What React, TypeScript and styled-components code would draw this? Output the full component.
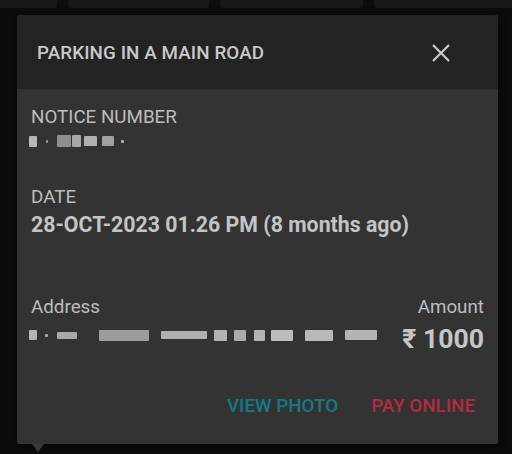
import React from "react";
import styled, { createGlobalStyle } from "styled-components";

const Global = createGlobalStyle`
  html, body { margin: 0; padding: 0; background: #0c0c0c; }
  body { font-family: Roboto, "Noto Sans", sans-serif; }
`;

const Page = styled.div`
  width: 512px;
  height: 454px;
  background: #0c0c0c;
  position: relative;
  overflow: hidden;
`;

const TileRow = styled.div`
  display: flex;
  gap: 11px;
  height: 8px;
  margin-left: -1px;
`;

const Tile = styled.div<{ $w: number }>`
  width: ${(p) => p.$w}px;
  flex: none;
  background: #171717;
  border-radius: 0 0 3px 3px;
`;

const Dialog = styled.div`
  position: absolute;
  left: 17px;
  top: 15px;
  width: 481px;
  height: 429px;
  background: #333333;
  border-radius: 2px;
  display: flex;
  flex-direction: column;
  box-shadow: 0 2px 8px rgba(0, 0, 0, 0.6);
`;

const Tail = styled.div`
  position: absolute;
  left: 15px;
  bottom: -8px;
  width: 0;
  height: 0;
  border-left: 6px solid transparent;
  border-right: 6px solid transparent;
  border-top: 8px solid #3a3a3a;
`;

const Header = styled.div`
  height: 74px;
  background: #232323;
  display: flex;
  align-items: center;
  justify-content: space-between;
  padding: 0 47px 0 20px;
  border-radius: 2px 2px 0 0;
`;

const Title = styled.div`
  color: #c9c9c9;
  font-size: 18.8px;
  font-weight: 500;
  letter-spacing: 0.1px;
  margin-top: 2px;
`;

const Body = styled.div`
  flex: 1;
  display: flex;
  flex-direction: column;
  padding: 16px 14px 0 14px;
`;

const Label = styled.div`
  color: #bdbdbd;
  font-size: 18.8px;
  line-height: 24px;
  font-weight: 400;
`;

const Value = styled.div`
  color: #c4c4c4;
  font-size: 21.3px;
  line-height: 26px;
  font-weight: 700;
  margin-top: 3px;
`;

const Redacted = styled.div<{ $h: number }>`
  display: flex;
  align-items: center;
  height: ${(p) => p.$h}px;
  margin-left: -2px;
  filter: blur(0.6px);
`;

const Chunk = styled.span<{ $w: number; $h: number; $c: string; $gap: number }>`
  display: inline-block;
  flex: none;
  width: ${(p) => p.$w}px;
  height: ${(p) => p.$h}px;
  margin-right: ${(p) => p.$gap}px;
  background: ${(p) => p.$c};
  border-radius: 1px;
`;

const Section = styled.div<{ $mt: number }>`
  margin-top: ${(p) => p.$mt}px;
`;

const Row = styled.div`
  display: flex;
  justify-content: space-between;
  align-items: flex-start;
  margin-top: 57px;
`;

const Col = styled.div<{ $right?: boolean }>`
  display: flex;
  flex-direction: column;
  align-items: ${(p) => (p.$right ? "flex-end" : "flex-start")};
`;

const Amount = styled.div`
  color: #c6c6c6;
  font-size: 26.6px;
  line-height: 32px;
  font-weight: 700;
  margin-top: 4px;
`;

const Actions = styled.div`
  display: flex;
  justify-content: flex-end;
  gap: 33px;
  margin-top: 39px;
  padding-right: 9px;
`;

const Action = styled.button<{ $c: string }>`
  background: none;
  border: none;
  padding: 0;
  font-family: Roboto, sans-serif;
  font-size: 18.8px;
  line-height: 24px;
  font-weight: 500;
  color: ${(p) => p.$c};
  cursor: pointer;
`;

const CloseBtn = styled.button`
  background: none;
  border: none;
  padding: 0;
  width: 20px;
  height: 20px;
  display: flex;
  align-items: center;
  justify-content: center;
  margin-top: 2px;
`;

const noticeChunks: [number, number, string, number][] = [
  [8, 11, "#b8b8b8", 9],
  [2, 3, "#9a9a9a", 9],
  [14, 12, "#8e8e8e", 1],
  [9, 12, "#a8a8a8", 3],
  [13, 10, "#b0b0b0", 5],
  [12, 10, "#a0a0a0", 7],
  [3, 3, "#b0b0b0", 0],
];

const addrChunks: [number, number, string, number][] = [
  [8, 10, "#b4b4b4", 8],
  [3, 3, "#aaaaaa", 9],
  [20, 7, "#a8a8a8", 22],
  [50, 11, "#9c9c9c", 12],
  [46, 8, "#b0b0b0", 7],
  [13, 11, "#b2b2b2", 7],
  [12, 11, "#aaaaaa", 8],
  [11, 11, "#b4b4b4", 6],
  [22, 11, "#bdbdbd", 12],
  [28, 11, "#b8b8b8", 12],
  [32, 10, "#b4b4b4", 0],
];

export default function App() {
  return (
    <Page>
      <Global />
      <TileRow>
        <Tile $w={58} />
        <Tile $w={141} />
        <Tile $w={143} />
        <Tile $w={140} />
      </TileRow>
      <Dialog>
        <Header>
          <Title>PARKING IN A MAIN ROAD</Title>
          <CloseBtn aria-label="close">
            <svg width="18" height="18" viewBox="0 0 18 18">
              <path d="M1 1 L17 17 M17 1 L1 17" stroke="#c9c9c9" strokeWidth="2.2" />
            </svg>
          </CloseBtn>
        </Header>
        <Body>
          <Label>NOTICE NUMBER</Label>
          <Redacted $h={24}>
            {noticeChunks.map(([w, h, c, g], i) => (
              <Chunk key={i} $w={w} $h={h} $c={c} $gap={g} />
            ))}
          </Redacted>
          <Section $mt={32}>
            <Label>DATE</Label>
            <Value>28-OCT-2023 01.26 PM (8 months ago)</Value>
          </Section>
          <Row>
            <Col>
              <Label>Address</Label>
              <Redacted $h={32}>
                {addrChunks.map(([w, h, c, g], i) => (
                  <Chunk key={i} $w={w} $h={h} $c={c} $gap={g} />
                ))}
              </Redacted>
            </Col>
            <Col $right>
              <Label>Amount</Label>
              <Amount>₹ 1000</Amount>
            </Col>
          </Row>
          <Actions>
            <Action $c="#157985">VIEW PHOTO</Action>
            <Action $c="#b52a3e">PAY ONLINE</Action>
          </Actions>
        </Body>
        <Tail />
      </Dialog>
    </Page>
  );
}
